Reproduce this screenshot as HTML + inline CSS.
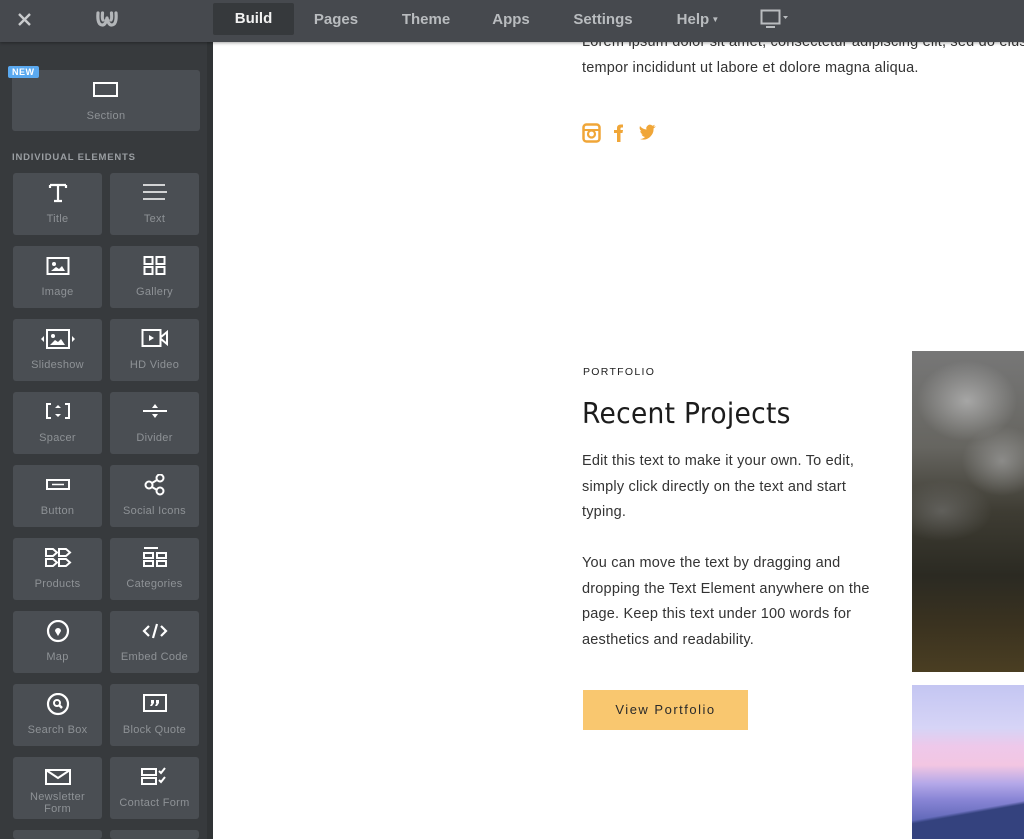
<!DOCTYPE html>
<html><head><meta charset="utf-8"><style>
*{margin:0;padding:0;box-sizing:border-box}
html,body{width:1024px;height:839px;overflow:hidden}
body{background:#fff;font-family:"Liberation Sans",sans-serif;position:relative}
#top{position:absolute;left:0;top:0;width:1024px;height:42px;background:#46494e;z-index:5;box-shadow:0 1px 3px rgba(0,0,0,.35)}
.nav{position:absolute;top:1px;height:38px;line-height:38px;color:#b9bcbf;font-weight:bold;font-size:15px;transform:translateX(-50%)}
#build{position:absolute;left:213px;top:3px;width:81px;height:32px;background:#36393c;border-radius:2px;color:#f1f1f1;font-weight:bold;font-size:15px;text-align:center;line-height:32px}
#side{position:absolute;left:0;top:42px;width:213px;height:797px;background:#373a3d;border-right:6px solid #303335}
.tile{position:absolute;width:89px;height:62px;background:#4a4e53;border-radius:3px;color:#8e9296;font-size:11px;text-align:center;letter-spacing:.3px}
.tile svg{position:absolute;left:50%;top:9px;transform:translateX(-50%)}
.tile span{position:absolute;left:0;right:0;top:40px;line-height:12px}
.l{left:13px}.r{left:110px}
.p{position:absolute;left:582px;color:#333;font-size:14.5px;line-height:25.5px;letter-spacing:.2px}
</style></head><body>
<div id="top">
<svg style="position:absolute;left:17px;top:12px" width="15" height="15" viewBox="0 0 15 15"><path d="M2 2L13 13M13 2L2 13" stroke="#c9cbcd" stroke-width="2.4"/></svg>
<svg style="position:absolute;left:95px;top:9px" width="24" height="20" viewBox="0 0 24 20"><path d="M3 4 Q2 16 7.5 16 Q10.5 16 12 9 Q13.5 16 16.5 16 Q22 16 21 4 M7.5 4 Q7 10 8 11 M16.5 4 Q17 10 16 11" fill="none" stroke="#b3b6b9" stroke-width="3.2" stroke-linecap="round" stroke-linejoin="round"/></svg>
<div id="build">Build</div>
<div class="nav" style="left:336px">Pages</div>
<div class="nav" style="left:426px">Theme</div>
<div class="nav" style="left:511px">Apps</div>
<div class="nav" style="left:603px">Settings</div>
<div class="nav" style="left:698px">Help<span style="font-size:8px;vertical-align:2px"> ▼</span></div>
<svg style="position:absolute;left:760px;top:9px" width="30" height="20" viewBox="0 0 30 20"><rect x="1.5" y="1.5" width="18" height="13" fill="none" stroke="#b9bcbf" stroke-width="2"/><path d="M6 18H15" stroke="#b9bcbf" stroke-width="2"/><path d="M23 7L28 7L25.5 10Z" fill="#b9bcbf"/></svg>
</div>

<div id="side">
<div class="tile" style="left:12px;top:28px;width:188px;height:61px"><svg width="26" height="16" viewBox="0 0 26 16" style="top:12px"><rect x="1" y="1" width="23" height="13" fill="none" stroke="#fff" stroke-width="2"/></svg><span style="top:40px">Section</span></div>
<div style="position:absolute;left:8px;top:24px;background:#5aa9f0;color:#fff;font-size:9px;font-weight:bold;padding:1px 4px;border-radius:2px;letter-spacing:.5px">NEW</div>
<div style="position:absolute;left:12px;top:110px;color:#9a9ea2;font-size:9.5px;font-weight:bold;letter-spacing:.8px">INDIVIDUAL ELEMENTS</div>
</div>

<div style="position:absolute;left:0;top:0">
<div class="tile l" style="top:173px"><svg width="22" height="22" viewBox="0 0 22 22"><path d="M3 3H19M11 3V19M7 19H15M3 3V6M19 3V6" stroke="#fff" stroke-width="2.2" fill="none"/></svg><span>Title</span></div>
<div class="tile r" style="top:173px"><svg width="26" height="22" viewBox="0 0 26 22"><path d="M1 3H23M1 10H25M1 17H23" stroke="#fff" stroke-width="1.6"/></svg><span>Text</span></div>
<div class="tile l" style="top:246px"><svg width="24" height="22" viewBox="0 0 24 22"><rect x="1.5" y="3" width="21" height="16" fill="none" stroke="#fff" stroke-width="2"/><circle cx="8" cy="9" r="2" fill="#fff"/><path d="M5 16L10 12L13 14L16 11L19 16Z" fill="#fff"/></svg><span>Image</span></div>
<div class="tile r" style="top:246px"><svg width="24" height="22" viewBox="0 0 24 22"><rect x="1.5" y="2" width="8" height="7" fill="none" stroke="#fff" stroke-width="2"/><rect x="13.5" y="2" width="8" height="7" fill="none" stroke="#fff" stroke-width="2"/><rect x="1.5" y="12" width="8" height="7" fill="none" stroke="#fff" stroke-width="2"/><rect x="13.5" y="12" width="8" height="7" fill="none" stroke="#fff" stroke-width="2"/></svg><span>Gallery</span></div>
<div class="tile l" style="top:319px"><svg width="38" height="22" viewBox="0 0 38 22"><rect x="8" y="2" width="22" height="18" fill="none" stroke="#fff" stroke-width="2"/><circle cx="14" cy="8" r="2" fill="#fff"/><path d="M11 17L16 12L19 14L22 11L26 17Z" fill="#fff"/><path d="M5 8L2 11L5 14Z M33 8L36 11L33 14Z" fill="#fff"/></svg><span>Slideshow</span></div>
<div class="tile r" style="top:319px"><svg width="28" height="22" viewBox="0 0 28 22"><rect x="1.5" y="2" width="18" height="16" fill="none" stroke="#fff" stroke-width="2"/><path d="M8 7L13 10L8 13Z" fill="#fff"/><path d="M20 9L26 4V16L20 11" fill="none" stroke="#fff" stroke-width="2"/></svg><span>HD Video</span></div>
<div class="tile l" style="top:392px"><svg width="26" height="22" viewBox="0 0 26 22"><path d="M6 3H2V17H6M20 3H24V17H20" fill="none" stroke="#fff" stroke-width="2"/><path d="M10 7L13 4L16 7ZM10 13L13 16L16 13Z" fill="#fff"/></svg><span>Spacer</span></div>
<div class="tile r" style="top:392px"><svg width="26" height="22" viewBox="0 0 26 22"><path d="M1 10H25" stroke="#fff" stroke-width="2"/><path d="M10 7L13 3L16 7ZM10 13L13 17L16 13Z" fill="#fff"/></svg><span>Divider</span></div>
<div class="tile l" style="top:465px"><svg width="26" height="22" viewBox="0 0 26 22"><rect x="2" y="6" width="22" height="9" fill="none" stroke="#fff" stroke-width="2"/><path d="M7 10.5H19" stroke="#fff" stroke-width="1.5"/></svg><span>Button</span></div>
<div class="tile r" style="top:465px"><svg width="26" height="22" viewBox="0 0 26 22"><circle cx="7" cy="11" r="3.5" fill="none" stroke="#fff" stroke-width="2"/><circle cx="18" cy="4" r="3.5" fill="none" stroke="#fff" stroke-width="2"/><circle cx="18" cy="17" r="3.5" fill="none" stroke="#fff" stroke-width="2"/><path d="M10 9L15 6M10 13L15 16" stroke="#fff" stroke-width="2"/></svg><span>Social Icons</span></div>
<div class="tile l" style="top:538px"><svg width="28" height="22" viewBox="0 0 28 22"><path d="M2 2H9L13 5.5L9 9H2ZM15 2H22L26 5.5L22 9H15ZM2 12H9L13 15.5L9 19H2ZM15 12H22L26 15.5L22 19H15Z" fill="none" stroke="#fff" stroke-width="2"/></svg><span>Products</span></div>
<div class="tile r" style="top:538px"><svg width="26" height="22" viewBox="0 0 26 22"><path d="M2 1H16" stroke="#fff" stroke-width="2"/><rect x="2" y="6" width="9" height="5" fill="none" stroke="#fff" stroke-width="2"/><rect x="15" y="6" width="9" height="5" fill="none" stroke="#fff" stroke-width="2"/><rect x="2" y="14" width="9" height="5" fill="none" stroke="#fff" stroke-width="2"/><rect x="15" y="14" width="9" height="5" fill="none" stroke="#fff" stroke-width="2"/></svg><span>Categories</span></div>
<div class="tile l" style="top:611px"><svg width="26" height="24" viewBox="0 0 26 24"><circle cx="13" cy="11" r="10" fill="none" stroke="#fff" stroke-width="2.2"/><path d="M13 16L10 11A3 3 0 1 1 16 11Z" fill="#fff"/></svg><span>Map</span></div>
<div class="tile r" style="top:611px"><svg width="26" height="22" viewBox="0 0 26 22"><path d="M7 6L2 11L7 16M19 6L24 11L19 16M15 4L11 18" fill="none" stroke="#fff" stroke-width="2.2"/></svg><span>Embed Code</span></div>
<div class="tile l" style="top:684px"><svg width="26" height="24" viewBox="0 0 26 24"><circle cx="13" cy="11" r="10" fill="none" stroke="#fff" stroke-width="2.2"/><circle cx="12" cy="10" r="3" fill="none" stroke="#fff" stroke-width="2"/><path d="M14 12L17 15" stroke="#fff" stroke-width="2.5"/></svg><span>Search Box</span></div>
<div class="tile r" style="top:684px"><svg width="26" height="22" viewBox="0 0 26 22"><rect x="2" y="2" width="22" height="16" fill="none" stroke="#fff" stroke-width="2"/><path d="M9 7H12V10L10 13H8L9.5 10H9ZM14 7H17V10L15 13H13L14.5 10H14Z" fill="#fff"/></svg><span>Block Quote</span></div>
<div class="tile l" style="top:757px"><svg width="28" height="22" viewBox="0 0 28 22"><rect x="2" y="4" width="24" height="14" fill="none" stroke="#fff" stroke-width="2"/><path d="M2 4L14 12L26 4" fill="none" stroke="#fff" stroke-width="2"/></svg><span style="top:34px">Newsletter<br>Form</span></div>
<div class="tile r" style="top:757px"><svg width="30" height="22" viewBox="0 0 30 22"><rect x="2" y="3" width="14" height="6" fill="none" stroke="#fff" stroke-width="2"/><rect x="2" y="12" width="14" height="6" fill="none" stroke="#fff" stroke-width="2"/><path d="M19 5L21 7L25 2M19 14L21 16L25 11" fill="none" stroke="#fff" stroke-width="2"/></svg><span style="top:40px">Contact Form</span></div>
<div class="tile l" style="top:830px;height:9px"></div>
<div class="tile r" style="top:830px;height:9px"></div>
</div>

<div class="p" style="top:30px;white-space:nowrap">Lorem ipsum dolor sit amet, consectetur adipiscing elit, sed do eiusmod<br>tempor incididunt ut labore et dolore magna aliqua.</div>

<svg style="position:absolute;left:582px;top:123px" width="80" height="21" viewBox="0 0 80 21">
<rect x="1.5" y="1.5" width="16" height="17" rx="3" fill="none" stroke="#f0a638" stroke-width="2.5"/><rect x="1.5" y="6" width="16" height="2" fill="#f0a638"/><circle cx="9.5" cy="11" r="3.5" fill="none" stroke="#f0a638" stroke-width="2.2"/>
<path d="M35 19V10H32V7H35V5Q35 1.5 39 1.5H41V4.5H39.5Q38.5 4.5 38.5 5.5V7H41L40.5 10H38.5V19Z" fill="#f0a638"/>
<path d="M58 16Q63.5 18 68 14Q72 10 71.5 5.5L74 3.5L71.5 3.8L73 1.8L70.5 2.7Q67 0 64.5 4Q64 5 64.5 6.5Q60.5 6.2 58 3Q56.8 6.2 59.5 8.3L58.2 8.1Q58.5 10.5 61 11.4H59.5Q60.5 13.6 63 14Q61 16 58 16Z" fill="#f0a638"/>
</svg>

<div style="position:absolute;left:583px;top:366px;font-size:10.5px;letter-spacing:1.3px;color:#222">PORTFOLIO</div>
<div style="position:absolute;left:582px;top:397px;font-size:28.5px;color:#1c1c1c;font-family:'DejaVu Sans','Liberation Sans',sans-serif;letter-spacing:.3px;transform:scaleX(.93);transform-origin:left">Recent Projects</div>
<div class="p" style="top:449px;width:302px">Edit this text to make it your own. To edit, simply click directly on the text and start typing.</div>
<div class="p" style="top:551px;width:302px">You can move the text by dragging and dropping the Text Element anywhere on the page. Keep this text under 100 words for aesthetics and readability.</div>
<div style="position:absolute;left:583px;top:690px;width:165px;height:40px;background:#f9c76f;text-align:center;line-height:40px;font-size:13px;letter-spacing:1.5px;color:#2a2a2a">View Portfolio</div>

<div style="position:absolute;left:912px;top:351px;width:112px;height:321px;background:
radial-gradient(ellipse 50px 40px at 55px 50px,rgba(190,190,190,.7),transparent),
radial-gradient(ellipse 40px 35px at 90px 110px,rgba(170,170,170,.6),transparent),
radial-gradient(ellipse 50px 30px at 30px 160px,rgba(130,130,130,.5),transparent),
linear-gradient(#777 0%,#666560 30%,#3e3c33 50%,#2b2a22 70%,#3a3220 85%,#4a3e22 100%)"></div>
<div style="position:absolute;left:912px;top:685px;width:112px;height:154px;background:
linear-gradient(170deg,transparent 78%,#34427e 80%),
linear-gradient(#c4c6f2 0%,#d6d4f6 28%,#eec8ea 40%,#f2c6e2 52%,#b4a8e8 64%,#8a86d6 74%,#6068b8 88%,#3a4488 100%)"></div>
</body></html>
